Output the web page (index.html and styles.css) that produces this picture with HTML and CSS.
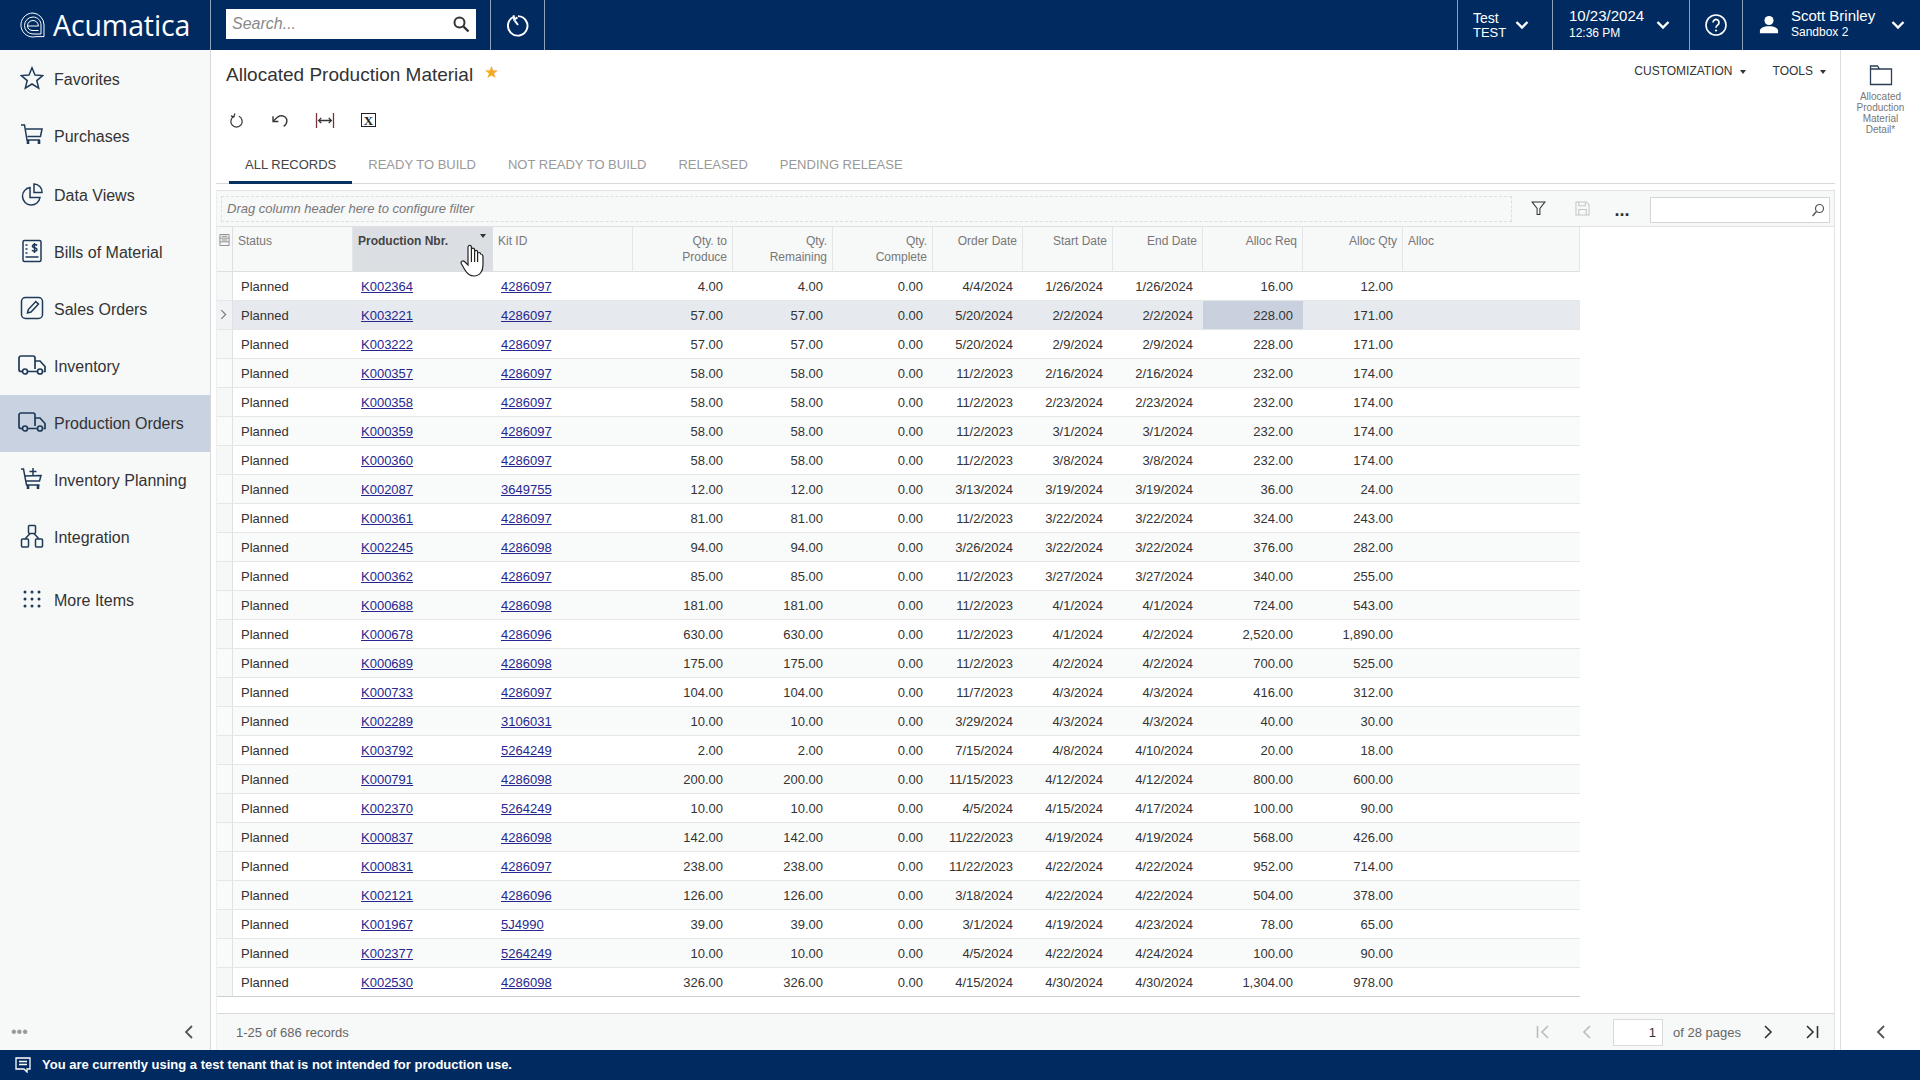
FILE: index.html
```html
<!DOCTYPE html>
<html lang="en">
<head>
    <meta charset="UTF-8">
    <meta name="viewport" content="width=device-width, initial-scale=1.0">
    <title>Allocated Production Material</title>
    <link rel="stylesheet" href="styles.css">
</head>
<body>

    <svg class="defs" width="0" height="0">
        <symbol id="chev-down" viewBox="0 0 14 10"><path d="M1.5 2 7 7.5 12.5 2" fill="none" stroke="currentColor" stroke-width="2.4"/></symbol>
        <symbol id="truck" viewBox="0 0 28 20"><path d="M4.500 16.500H3a2 2 0 0 1-2-2V3a2 2 0 0 1 2-2h12a2 2 0 0 1 2 2v11M9.500 16.500h9.500M17 6h5l5 5.500v5h-1.500" fill="none" stroke="currentColor" stroke-width="1.700"/><circle cx="7" cy="16.500" r="2.500" fill="none" stroke="currentColor" stroke-width="1.700"/><circle cx="22" cy="16.500" r="2.500" fill="none" stroke="currentColor" stroke-width="1.700"/></symbol>
    </svg>

    <header class="topbar">
        <div class="logo">
            <svg class="logo-mark" viewBox="0 0 26 26"><path d="M13 1a12 12 0 1 0 3 23.6h8V13A12 12 0 0 0 13 1Z" fill="none" stroke="#fff" stroke-width="1"/><path d="M13 5a8.5 8.5 0 0 0-8.500 8.500A8.500 8.500 0 0 0 13 22h8v-9c0-4.500-3.500-8-8-8Z" fill="none" stroke="#fff" stroke-width="1"/><path d="M7.500 14c0-3.500 2.500-5.500 5.500-5.500s5 2 5.500 5.500H7.500c.2 3 2.500 4.500 5.500 4.500h5.500" fill="none" stroke="#fff" stroke-width="1"/></svg>
            <span class="logo-text">Acumatica</span>
        </div>
        <div class="search-wrap">
            <div class="search">
                <span class="search-hint">Search...</span>
                <svg viewBox="0 0 18 18" width="18" height="18"><circle cx="7.500" cy="7.500" r="5" fill="none" stroke="#333" stroke-width="2"/><path d="m11.500 11.500 5 5" stroke="#333" stroke-width="2.400"/></svg>
            </div>
        </div>
        <div class="history">
            <svg viewBox="0 0 24 24" width="26" height="26"><path d="M8 4.600a9 9 0 1 0 4-.800" fill="none" stroke="#fff" stroke-width="1.800"/><path d="m8 3 .5 4 3-2M12 12 9 8" fill="none" stroke="#fff" stroke-width="1.800"/></svg>
        </div>
        <div class="topbar-space"></div>
        <div class="top-item top-tenant">
            <div class="top-lines"><span class="line-big">Test</span><span class="line-mid">TEST</span></div>
            <svg class="chev"><use href="#chev-down"/></svg>
        </div>
        <div class="top-item top-date">
            <div class="top-lines"><span class="line-large">10/23/2024</span><span class="line-small">12:36 PM</span></div>
            <svg class="chev"><use href="#chev-down"/></svg>
        </div>
        <div class="top-item top-help">
            <svg viewBox="0 0 24 24" width="24" height="24"><circle cx="12" cy="12" r="10" fill="none" stroke="#fff" stroke-width="1.600"/><path d="M9 9.500a3 3 0 1 1 4.800 2.400c-1.200.9-1.800 1.400-1.800 2.800" fill="none" stroke="#fff" stroke-width="1.700"/><circle cx="12" cy="17.500" r="1.100" fill="#fff"/></svg>
        </div>
        <div class="top-item top-user">
            <svg viewBox="0 0 22 24" width="20" height="22"><circle cx="11" cy="7" r="5" fill="#fff"/><path d="M1 21v-2.500c0-3 4-5 10-5s10 2 10 5V21Z" fill="#fff"/></svg>
            <div class="top-lines user-lines"><span class="line-large">Scott Brinley</span><span class="line-small">Sandbox 2</span></div>
            <svg class="chev"><use href="#chev-down"/></svg>
        </div>
    </header>

    <div class="main">
        <nav class="sidebar">
            <a class="nav-item">
                <svg viewBox="0 0 24 24"><path d="m12 1.800 3 7.200 7.700.6-5.900 5 1.900 7.500L12 18l-6.700 4.100 1.900-7.500-5.900-5L9 9Z"/></svg>
                Favorites
            </a>
            <a class="nav-item nav-gap">
                <svg viewBox="0 0 24 24"><path d="M1 2h3.500l2.500 15h13M6 6h16l-1.500 7.500H7.500"/><path d="M8 17v4M19 17v4" stroke-width="2.600"/></svg>
                Purchases
            </a>
            <a class="nav-item">
                <svg viewBox="0 0 24 24"><path d="M10 5.500a8.800 8.800 0 1 0 10 10H10Z"/><path d="M14 2a8 8 0 0 1 8 8.500h-8Z"/></svg>
                Data Views
            </a>
            <a class="nav-item">
                <svg viewBox="0 0 24 24"><rect x="3" y="1.500" width="18" height="21" rx="1.500"/><path d="M5.500 6h2M5.500 10h2M5.500 14h2M5.500 18h13M17 6.500c-1-1.500-5-1.200-4.500 1 .4 1.700 4.500 1 4.500 3s-4 2.200-5 .7M14.500 4v10"/></svg>
                Bills of Material
            </a>
            <a class="nav-item">
                <svg viewBox="0 0 24 24"><rect x="1.500" y="1.500" width="21" height="21" rx="4"/><path d="m7.500 17 .8-3.500 7.500-8 2.700 2.600-7.500 8Z"/></svg>
                Sales Orders
            </a>
            <a class="nav-item">
                <svg class="nav-truck" viewBox="0 0 28 20"><use href="#truck"/></svg>
                Inventory
            </a>
            <a class="nav-item nav-active">
                <svg class="nav-truck" viewBox="0 0 28 20"><use href="#truck"/></svg>
                Production Orders
            </a>
            <a class="nav-item">
                <svg viewBox="0 0 24 24"><path d="M1 2h2.500L6.500 18h13M5 9l16-.5-1.500 5.500H6.500M13 1v7M9.500 4.500h7"/><path d="M8 18v4M18 18v4" stroke-width="2.600"/></svg>
                Inventory Planning
            </a>
            <a class="nav-item">
                <svg viewBox="0 0 24 24"><rect x="8.500" y="1.500" width="7" height="8" rx="1"/><rect x="1.500" y="15" width="7" height="8" rx="1"/><rect x="15.500" y="15" width="7" height="8" rx="1"/><path d="M10 9.500 5 15M14 9.500l5 5.500"/></svg>
                Integration
            </a>
            <a class="nav-item nav-more">
                <svg viewBox="0 0 24 24"><g class="dots"><circle cx="5" cy="5" r="1.500"/><circle cx="12" cy="5" r="1.500"/><circle cx="19" cy="5" r="1.500"/><circle cx="5" cy="12" r="1.500"/><circle cx="12" cy="12" r="1.500"/><circle cx="19" cy="12" r="1.500"/><circle cx="5" cy="19" r="1.500"/><circle cx="12" cy="19" r="1.500"/><circle cx="19" cy="19" r="1.500"/></g></svg>
                More Items
            </a>
            <div class="side-foot">
                <span class="side-dots">•••</span>
                <svg viewBox="0 0 10 16" width="10" height="16"><path d="M8 2 2 8l6 6" fill="none" stroke="#555" stroke-width="1.800"/></svg>
            </div>
        </nav>

        <section class="content">
            <div class="title-row">
                <h1 class="page-title">Allocated Production Material <span class="star">★</span></h1>
                <div class="page-menu">
                    <span>CUSTOMIZATION<i class="caret"></i></span>
                    <span>TOOLS<i class="caret"></i></span>
                </div>
            </div>

            <div class="actions">
                <svg viewBox="0 0 16 18"><path d="M5 4.500a6 6 0 1 0 5 0" fill="none" stroke="#333" stroke-width="1.300"/><path d="M5 1.500v3.800H1.800" transform="rotate(20 5 4)" fill="none" stroke="#333" stroke-width="1.300"/></svg>
                <svg viewBox="0 0 18 16"><path d="M2 8.500c2.500-3 4.500-5 7-5a5 5 0 0 1 5.500 5c0 2.500-1.500 4-3 5" fill="none" stroke="#333" stroke-width="1.300"/><path d="M1.500 4v5h5" fill="none" stroke="#333" stroke-width="1.300"/></svg>
                <svg viewBox="0 0 18 16"><path d="M1 1v14M17 1v14" stroke="#733" stroke-width="1.200"/><path d="M3 8h12M5.500 5.500 3 8l2.500 2.500M12.500 5.500 15 8l-2.500 2.500" fill="none" stroke="#333" stroke-width="1.200"/></svg>
                <span class="excel-box"><span class="excel-x">X</span></span>
            </div>

            <div class="tabs">
                <a class="tab tab-active">ALL RECORDS</a>
                <a class="tab">READY TO BUILD</a>
                <a class="tab">NOT READY TO BUILD</a>
                <a class="tab">RELEASED</a>
                <a class="tab">PENDING RELEASE</a>
            </div>

            <div class="grid">
                <div class="grid-tools">
                    <div class="filter-drop">Drag column header here to configure filter</div>
                    <span class="tool-btn">
                        <svg viewBox="0 0 16 16" width="15" height="15"><path d="M1 1h14L9.500 8v6.500h-3V8Z" fill="none" stroke="#333" stroke-width="1.100"/></svg>
                    </span>
                    <span class="tool-btn">
                        <svg viewBox="0 0 16 16" width="15" height="15"><path d="M1 1h11l3 3v11H1ZM4 1v4h7V1M4 15V9h8v6" fill="none" stroke="#c4c6c8" stroke-width="1.100"/></svg>
                    </span>
                    <span class="tool-btn tool-more">...</span>
                    <div class="grid-search">
                        <svg viewBox="0 0 14 14" width="14" height="14"><circle cx="8.500" cy="5.500" r="4" fill="none" stroke="#555" stroke-width="1.200"/><path d="m5.500 8.500-4 4.500" stroke="#555" stroke-width="1.400"/></svg>
                    </div>
                </div>

                <div class="table-wrap">
                    <table class="records">
                        <colgroup>
                            <col class="c-gutter"><col class="c-status"><col class="c-link"><col class="c-link">
                            <col class="c-qty"><col class="c-qty"><col class="c-qty">
                            <col class="c-date"><col class="c-date"><col class="c-date">
                            <col class="c-qty"><col class="c-qty"><col class="c-last">
                        </colgroup>
                        <thead>
                            <tr>
                                <th class="gutter"><svg viewBox="0 0 12 13" width="11" height="12"><path d="M1 .5h10v12H1ZM1 4.500h10M1 8.500h10M3 2.500h6M3 6.500h6" fill="none" stroke="#888" stroke-width="1"/></svg></th>
                                <th>Status</th>
                                <th class="sorted">Production Nbr.<i class="sort-mark"></i></th>
                                <th>Kit ID</th>
                                <th class="num">Qty. to<br>Produce</th>
                                <th class="num">Qty.<br>Remaining</th>
                                <th class="num">Qty.<br>Complete</th>
                                <th class="num">Order Date</th>
                                <th class="num">Start Date</th>
                                <th class="num">End Date</th>
                                <th class="num">Alloc Req</th>
                                <th class="num">Alloc Qty</th>
                                <th>Alloc</th>
                            </tr>
                        </thead>
                        <tbody>
                            <tr><td class="gutter"></td><td class="status">Planned</td><td class="pl"><a>K002364</a></td><td class="pl"><a>4286097</a></td><td class="val">4.00</td><td class="val">4.00</td><td class="val">0.00</td><td class="val">4/4/2024</td><td class="val">1/26/2024</td><td class="val">1/26/2024</td><td class="val">16.00</td><td class="val">12.00</td><td></td></tr>
                            <tr class="selected"><td class="gutter"><svg viewBox="0 0 8 12" width="7" height="11"><path d="m1.500 1 5 5-5 5" fill="none" stroke="#777" stroke-width="1.300"/></svg></td><td class="status">Planned</td><td class="pl"><a>K003221</a></td><td class="pl"><a>4286097</a></td><td class="val">57.00</td><td class="val">57.00</td><td class="val">0.00</td><td class="val">5/20/2024</td><td class="val">2/2/2024</td><td class="val">2/2/2024</td><td class="val active-cell">228.00</td><td class="val">171.00</td><td></td></tr>
                            <tr><td class="gutter"></td><td class="status">Planned</td><td class="pl"><a>K003222</a></td><td class="pl"><a>4286097</a></td><td class="val">57.00</td><td class="val">57.00</td><td class="val">0.00</td><td class="val">5/20/2024</td><td class="val">2/9/2024</td><td class="val">2/9/2024</td><td class="val">228.00</td><td class="val">171.00</td><td></td></tr>
                            <tr><td class="gutter"></td><td class="status">Planned</td><td class="pl"><a>K000357</a></td><td class="pl"><a>4286097</a></td><td class="val">58.00</td><td class="val">58.00</td><td class="val">0.00</td><td class="val">11/2/2023</td><td class="val">2/16/2024</td><td class="val">2/16/2024</td><td class="val">232.00</td><td class="val">174.00</td><td></td></tr>
                            <tr><td class="gutter"></td><td class="status">Planned</td><td class="pl"><a>K000358</a></td><td class="pl"><a>4286097</a></td><td class="val">58.00</td><td class="val">58.00</td><td class="val">0.00</td><td class="val">11/2/2023</td><td class="val">2/23/2024</td><td class="val">2/23/2024</td><td class="val">232.00</td><td class="val">174.00</td><td></td></tr>
                            <tr><td class="gutter"></td><td class="status">Planned</td><td class="pl"><a>K000359</a></td><td class="pl"><a>4286097</a></td><td class="val">58.00</td><td class="val">58.00</td><td class="val">0.00</td><td class="val">11/2/2023</td><td class="val">3/1/2024</td><td class="val">3/1/2024</td><td class="val">232.00</td><td class="val">174.00</td><td></td></tr>
                            <tr><td class="gutter"></td><td class="status">Planned</td><td class="pl"><a>K000360</a></td><td class="pl"><a>4286097</a></td><td class="val">58.00</td><td class="val">58.00</td><td class="val">0.00</td><td class="val">11/2/2023</td><td class="val">3/8/2024</td><td class="val">3/8/2024</td><td class="val">232.00</td><td class="val">174.00</td><td></td></tr>
                            <tr><td class="gutter"></td><td class="status">Planned</td><td class="pl"><a>K002087</a></td><td class="pl"><a>3649755</a></td><td class="val">12.00</td><td class="val">12.00</td><td class="val">0.00</td><td class="val">3/13/2024</td><td class="val">3/19/2024</td><td class="val">3/19/2024</td><td class="val">36.00</td><td class="val">24.00</td><td></td></tr>
                            <tr><td class="gutter"></td><td class="status">Planned</td><td class="pl"><a>K000361</a></td><td class="pl"><a>4286097</a></td><td class="val">81.00</td><td class="val">81.00</td><td class="val">0.00</td><td class="val">11/2/2023</td><td class="val">3/22/2024</td><td class="val">3/22/2024</td><td class="val">324.00</td><td class="val">243.00</td><td></td></tr>
                            <tr><td class="gutter"></td><td class="status">Planned</td><td class="pl"><a>K002245</a></td><td class="pl"><a>4286098</a></td><td class="val">94.00</td><td class="val">94.00</td><td class="val">0.00</td><td class="val">3/26/2024</td><td class="val">3/22/2024</td><td class="val">3/22/2024</td><td class="val">376.00</td><td class="val">282.00</td><td></td></tr>
                            <tr><td class="gutter"></td><td class="status">Planned</td><td class="pl"><a>K000362</a></td><td class="pl"><a>4286097</a></td><td class="val">85.00</td><td class="val">85.00</td><td class="val">0.00</td><td class="val">11/2/2023</td><td class="val">3/27/2024</td><td class="val">3/27/2024</td><td class="val">340.00</td><td class="val">255.00</td><td></td></tr>
                            <tr><td class="gutter"></td><td class="status">Planned</td><td class="pl"><a>K000688</a></td><td class="pl"><a>4286098</a></td><td class="val">181.00</td><td class="val">181.00</td><td class="val">0.00</td><td class="val">11/2/2023</td><td class="val">4/1/2024</td><td class="val">4/1/2024</td><td class="val">724.00</td><td class="val">543.00</td><td></td></tr>
                            <tr><td class="gutter"></td><td class="status">Planned</td><td class="pl"><a>K000678</a></td><td class="pl"><a>4286096</a></td><td class="val">630.00</td><td class="val">630.00</td><td class="val">0.00</td><td class="val">11/2/2023</td><td class="val">4/1/2024</td><td class="val">4/2/2024</td><td class="val">2,520.00</td><td class="val">1,890.00</td><td></td></tr>
                            <tr><td class="gutter"></td><td class="status">Planned</td><td class="pl"><a>K000689</a></td><td class="pl"><a>4286098</a></td><td class="val">175.00</td><td class="val">175.00</td><td class="val">0.00</td><td class="val">11/2/2023</td><td class="val">4/2/2024</td><td class="val">4/2/2024</td><td class="val">700.00</td><td class="val">525.00</td><td></td></tr>
                            <tr><td class="gutter"></td><td class="status">Planned</td><td class="pl"><a>K000733</a></td><td class="pl"><a>4286097</a></td><td class="val">104.00</td><td class="val">104.00</td><td class="val">0.00</td><td class="val">11/7/2023</td><td class="val">4/3/2024</td><td class="val">4/3/2024</td><td class="val">416.00</td><td class="val">312.00</td><td></td></tr>
                            <tr><td class="gutter"></td><td class="status">Planned</td><td class="pl"><a>K002289</a></td><td class="pl"><a>3106031</a></td><td class="val">10.00</td><td class="val">10.00</td><td class="val">0.00</td><td class="val">3/29/2024</td><td class="val">4/3/2024</td><td class="val">4/3/2024</td><td class="val">40.00</td><td class="val">30.00</td><td></td></tr>
                            <tr><td class="gutter"></td><td class="status">Planned</td><td class="pl"><a>K003792</a></td><td class="pl"><a>5264249</a></td><td class="val">2.00</td><td class="val">2.00</td><td class="val">0.00</td><td class="val">7/15/2024</td><td class="val">4/8/2024</td><td class="val">4/10/2024</td><td class="val">20.00</td><td class="val">18.00</td><td></td></tr>
                            <tr><td class="gutter"></td><td class="status">Planned</td><td class="pl"><a>K000791</a></td><td class="pl"><a>4286098</a></td><td class="val">200.00</td><td class="val">200.00</td><td class="val">0.00</td><td class="val">11/15/2023</td><td class="val">4/12/2024</td><td class="val">4/12/2024</td><td class="val">800.00</td><td class="val">600.00</td><td></td></tr>
                            <tr><td class="gutter"></td><td class="status">Planned</td><td class="pl"><a>K002370</a></td><td class="pl"><a>5264249</a></td><td class="val">10.00</td><td class="val">10.00</td><td class="val">0.00</td><td class="val">4/5/2024</td><td class="val">4/15/2024</td><td class="val">4/17/2024</td><td class="val">100.00</td><td class="val">90.00</td><td></td></tr>
                            <tr><td class="gutter"></td><td class="status">Planned</td><td class="pl"><a>K000837</a></td><td class="pl"><a>4286098</a></td><td class="val">142.00</td><td class="val">142.00</td><td class="val">0.00</td><td class="val">11/22/2023</td><td class="val">4/19/2024</td><td class="val">4/19/2024</td><td class="val">568.00</td><td class="val">426.00</td><td></td></tr>
                            <tr><td class="gutter"></td><td class="status">Planned</td><td class="pl"><a>K000831</a></td><td class="pl"><a>4286097</a></td><td class="val">238.00</td><td class="val">238.00</td><td class="val">0.00</td><td class="val">11/22/2023</td><td class="val">4/22/2024</td><td class="val">4/22/2024</td><td class="val">952.00</td><td class="val">714.00</td><td></td></tr>
                            <tr><td class="gutter"></td><td class="status">Planned</td><td class="pl"><a>K002121</a></td><td class="pl"><a>4286096</a></td><td class="val">126.00</td><td class="val">126.00</td><td class="val">0.00</td><td class="val">3/18/2024</td><td class="val">4/22/2024</td><td class="val">4/22/2024</td><td class="val">504.00</td><td class="val">378.00</td><td></td></tr>
                            <tr><td class="gutter"></td><td class="status">Planned</td><td class="pl"><a>K001967</a></td><td class="pl"><a>5J4990</a></td><td class="val">39.00</td><td class="val">39.00</td><td class="val">0.00</td><td class="val">3/1/2024</td><td class="val">4/19/2024</td><td class="val">4/23/2024</td><td class="val">78.00</td><td class="val">65.00</td><td></td></tr>
                            <tr><td class="gutter"></td><td class="status">Planned</td><td class="pl"><a>K002377</a></td><td class="pl"><a>5264249</a></td><td class="val">10.00</td><td class="val">10.00</td><td class="val">0.00</td><td class="val">4/5/2024</td><td class="val">4/22/2024</td><td class="val">4/24/2024</td><td class="val">100.00</td><td class="val">90.00</td><td></td></tr>
                            <tr><td class="gutter"></td><td class="status">Planned</td><td class="pl"><a>K002530</a></td><td class="pl"><a>4286098</a></td><td class="val">326.00</td><td class="val">326.00</td><td class="val">0.00</td><td class="val">4/15/2024</td><td class="val">4/30/2024</td><td class="val">4/30/2024</td><td class="val">1,304.00</td><td class="val">978.00</td><td></td></tr>
                        </tbody>
                    </table>
                </div>

                <div class="pager">
                    <span class="pager-count">1-25 of 686 records</span>
                    <div class="pager-nav">
                        <svg class="page-btn" viewBox="0 0 16 16"><path d="M2.500 2v12M13 2 7 8l6 6" fill="none" stroke="#bbb" stroke-width="1.600"/></svg>
                        <svg class="page-btn" viewBox="0 0 16 16"><path d="M11 2 5 8l6 6" fill="none" stroke="#bbb" stroke-width="1.600"/></svg>
                        <span class="page-input">1</span>
                        <span class="page-total">of 28 pages</span>
                        <svg class="page-btn" viewBox="0 0 16 16"><path d="m5 2 6 6-6 6" fill="none" stroke="#333" stroke-width="1.600"/></svg>
                        <svg class="page-btn" viewBox="0 0 16 16"><path d="m3 2 6 6-6 6M13.500 2v12" fill="none" stroke="#333" stroke-width="1.600"/></svg>
                    </div>
                </div>
            </div>
        </section>

        <aside class="side-panel">
            <div class="panel-link">
                <svg viewBox="0 0 24 24" width="24" height="24"><path d="M1.500 21.500V3h7l2 3h12v15.500ZM1.500 6h9" fill="none" stroke="#2b3f55" stroke-width="1.300"/></svg>
                <span>Allocated<br>Production<br>Material<br>Detail*</span>
            </div>
            <svg class="panel-back" viewBox="0 0 10 16" width="10" height="16"><path d="M8 2 2 8l6 6" fill="none" stroke="#555" stroke-width="1.800"/></svg>
        </aside>
    </div>

    <footer class="notice">
        <svg viewBox="0 0 16 16" width="16" height="16"><path d="M1 1h14v11h-3v3l-3-3H1Z" fill="none" stroke="#fff" stroke-width="1.300"/><path d="M4 4.500h8M4 7.500h8" stroke="#fff" stroke-width="1.300"/></svg>
        You are currently using a test tenant that is not intended for production use.
    </footer>

    <!-- mouse pointer in the recording -->
    <svg class="hand" viewBox="0 0 26 34"><path d="M8 3.500c0-3 3.400-3 3.400 0v2.500c0-2.400 3.200-2.400 3.200 0v2c0-2.200 3-2.200 3 0v2c0-2 3-2 3 0 2.400 0 2.400 1.500 2.400 3v8c0 6-3 11-9 11-5 0-7-2.500-9-6L1.500 20c-1.300-2.200 1-4 3-2.500L8 21Z" fill="#fff" stroke="#222" stroke-width="1.200"/><path d="M11.400 6v12M14.600 8v10M17.600 10v8" fill="none" stroke="#222" stroke-width="1.200"/></svg>

</body>
</html>
```

FILE: styles.css
```css
* {
    box-sizing: border-box;
}

html, body {
    height: 100%;
}

body {
    margin: 0;
    font-family: 'Liberation Sans', Arial, sans-serif;
    font-size: 13px;
    color: #333;
    background-color: #fff;
    display: flex;
    flex-direction: column;
    overflow: hidden;
    position: relative;
}

.defs {
    position: absolute;
}

/* barra superior */
.topbar {
    height: 50px;
    flex: none;
    display: flex;
    background-color: #012b60;
    color: #fff;
}

.logo {
    width: 211px;
    display: flex;
    align-items: center;
    padding-left: 20px;
    gap: 7px;
    border-right: 1px solid #8fa3bd;
}

.logo-mark {
    width: 26px;
    height: 26px;
}

.logo-text {
    font-family: 'Open Sans', sans-serif;
    font-size: 28.500px;
    letter-spacing: -0.1px;
}

.search-wrap {
    width: 280px;
    padding-left: 15px;
    display: flex;
    align-items: center;
    border-right: 1px solid #8fa3bd;
}

.search {
    width: 250px;
    height: 30px;
    margin-top: -3px;
    background-color: #fff;
    display: flex;
    align-items: center;
    justify-content: space-between;
    padding: 0 6px 0 6px;
}

.search-hint {
    font-size: 16px;
    font-style: italic;
    color: #8a8a8a;
}

.history {
    width: 54px;
    display: flex;
    align-items: center;
    justify-content: center;
    border-right: 1px solid #8fa3bd;
}

.topbar-space {
    flex: 1;
}

.top-item {
    display: flex;
    align-items: center;
    border-left: 1px solid #8fa3bd;
}

.top-tenant {
    width: 95px;
    padding-left: 15px;
}

.top-date {
    width: 137px;
    padding-left: 16px;
}

.top-help {
    width: 53px;
    justify-content: center;
}

.top-user {
    width: 178px;
    padding-left: 16px;
}

.top-lines {
    display: flex;
    flex-direction: column;
}

.user-lines {
    margin-left: 12px;
    width: 97px;
}

.user-lines .line-large {
    line-height: 15px;
}

.user-lines .line-small {
    line-height: 19px;
}

.line-big {
    font-size: 14px;
    line-height: 16px;
}

.line-mid {
    font-size: 13px;
    line-height: 14px;
}

.line-large {
    font-size: 15px;
    line-height: 16px;
}

.line-small {
    font-size: 12px;
    line-height: 18px;
}

.chev {
    width: 14px;
    height: 10px;
    color: #fff;
}

.top-tenant .chev {
    margin-left: 9px;
}

.top-date .chev {
    margin-left: 12px;
}

.top-user .chev {
    margin-left: 3px;
}

.main {
    flex: 1;
    min-height: 0;
    display: flex;
}

/* menu lateral */
.sidebar {
    width: 211px;
    flex: none;
    display: flex;
    flex-direction: column;
    background-color: #f7f9f9;
    border-right: 1px solid #d6d9dc;
    padding-top: 1px;
}

.nav-item {
    height: 57px;
    flex: none;
    display: flex;
    align-items: center;
    gap: 10px;
    padding-left: 20px;
    font-size: 16px;
    color: #333;
}

.nav-item svg {
    width: 24px;
    height: 24px;
    fill: none;
    stroke: #1f3a57;
    stroke-width: 1.500;
    color: #1f3a57;
    margin-top: -3px;
}

.nav-item svg.nav-truck {
    width: 28px;
    height: 20px;
    margin-left: -2px;
    margin-right: -2px;
    stroke: none;
}

.nav-gap {
    margin-bottom: 2px;
}

.nav-active {
    background-color: #c8d2e0;
}

.nav-more {
    margin-top: 6px;
}

.dots {
    fill: #1f3a57;
    stroke: none;
}

.side-foot {
    margin-top: auto;
    height: 36px;
    display: flex;
    align-items: center;
    justify-content: space-between;
    padding: 0 16px 0 11px;
}

.side-dots {
    color: #999;
    font-size: 16px;
}

/* conteudo */
.content {
    flex: 1;
    min-width: 0;
    display: flex;
    flex-direction: column;
    padding: 0 5px 0 5px;
}

.title-row {
    height: 50px;
    flex: none;
    display: flex;
    justify-content: space-between;
    padding-left: 10px;
}

.page-title {
    margin: 0;
    font-size: 19px;
    font-weight: normal;
    line-height: 50px;
    color: #333;
}

.star {
    color: #f5a91f;
    font-size: 17px;
    margin-left: 6px;
    position: relative;
    top: -3px;
}

.page-menu {
    display: flex;
    gap: 27px;
    padding: 14px 9px 0 0;
    font-size: 12px;
    line-height: 14px;
    color: #333;
}

.caret {
    display: inline-block;
    margin-left: 7px;
    vertical-align: middle;
    border-left: 3.500px solid transparent;
    border-right: 3.500px solid transparent;
    border-top: 4px solid #333;
}

.actions {
    height: 40px;
    flex: none;
    display: flex;
    align-items: center;
    margin-left: -1px;
}

.actions svg {
    width: 44px;
    height: 17px;
}

.excel-box {
    width: 15px;
    height: 14px;
    margin-left: 14px;
    display: flex;
    align-items: center;
    justify-content: center;
    border: 1.500px solid #222;
}

.excel-x {
    font-family: 'Liberation Serif', serif;
    font-size: 13px;
    font-weight: bold;
    line-height: 11px;
    color: #222;
}

.tabs {
    height: 44px;
    flex: none;
    display: flex;
    padding-left: 13px;
    border-bottom: 1px solid #d8dadc;
}

.tab {
    height: 44px;
    padding: 17px 16px 0;
    line-height: 16px;
    font-size: 13px;
    color: #999;
}

.tab-active {
    color: #444;
    border-bottom: 3px solid #06305f;
}

/* grade */
.grid {
    flex: 1;
    min-height: 0;
    margin-top: 6px;
    display: flex;
    flex-direction: column;
    border: 1px solid #e0e2e4;
    border-bottom: none;
    border-left-color: #eceeef;
}

.grid-tools {
    height: 36px;
    flex: none;
    display: flex;
    align-items: center;
    padding: 0 4px 0 4px;
    background-color: #f7f8f8;
    border-bottom: 1px solid #dfe1e3;
}

.filter-drop {
    flex: 1;
    height: 26px;
    margin-right: 4px;
    line-height: 24px;
    padding-left: 5px;
    font-style: italic;
    color: #777;
    border: 1px dashed #dcdedf;
}

.tool-btn {
    width: 44px;
    height: 26px;
    display: flex;
    align-items: center;
    justify-content: center;
}

.tool-more {
    width: 36px;
    font-size: 18px;
    font-weight: bold;
    color: #333;
    line-height: 26px;
    padding-top: 2px;
}

.grid-search {
    width: 180px;
    height: 26px;
    margin: 2px 0 0 10px;
    background-color: #fff;
    border: 1px solid #d3d5d7;
    display: flex;
    align-items: center;
    justify-content: flex-end;
    padding-right: 4px;
}

.table-wrap {
    flex: 1;
    min-height: 0;
}

.records {
    table-layout: fixed;
    border-collapse: separate;
    border-spacing: 0;
    width: 1363px;
}

.c-gutter { width: 16px; }
.c-status { width: 120px; }
.c-link { width: 140px; }
.c-qty { width: 100px; }
.c-date { width: 90px; }
.c-last { width: 177px; }

.records th {
    height: 45px;
    padding: 6px 5px 0;
    vertical-align: top;
    text-align: left;
    font-size: 12px;
    font-weight: normal;
    line-height: 16px;
    color: #777;
    background-color: #f7f8f8;
    border-right: 1px solid #e3e5e7;
    border-bottom: 1px solid #dcdee0;
    position: relative;
}

.records th.num {
    text-align: right;
}

.records th.sorted {
    background-color: #dbdfe3;
    font-weight: bold;
    color: #444;
    border-right: none;
}

.records th.gutter {
    padding: 7px 0 0 2px;
    border-right: 1px solid #dcdee0;
}

.sort-mark {
    position: absolute;
    top: 7px;
    right: 7px;
    border-left: 3.500px solid transparent;
    border-right: 3.500px solid transparent;
    border-top: 4px solid #333;
}

.records td {
    height: 29px;
    padding: 0 10px 0 0;
    font-size: 13px;
    color: #333;
    white-space: nowrap;
    border-bottom: 1px solid #e4e6e7;
}

.records tbody tr:nth-child(even) td {
    background-color: #f9fafa;
}

.records td.gutter {
    padding: 1px 0 0 3px;
    background-color: #f6f7f7;
    border-right: 1px solid #dfe1e3;
}

.records td.status {
    padding-left: 8px;
}

.records td.pl {
    padding-left: 8px;
}

.records td a {
    color: #27278f;
    text-decoration: underline;
}

.records td.val {
    text-align: right;
}

.records tbody tr.selected td {
    background-color: #e6eaef;
}

.records tbody tr.selected td.active-cell {
    background-color: #c9d1de;
}

.records tbody tr.selected td.gutter {
    background-color: #f0f2f4;
}

.records tbody tr:last-child td {
    border-bottom-color: #ccd0d3;
}

.pager {
    height: 37px;
    flex: none;
    display: flex;
    align-items: center;
    justify-content: space-between;
    padding: 0 0 0 19px;
    background-color: #f7f8f8;
    border-top: 1px solid #d8dadc;
}

.pager-count {
    color: #666;
}

.pager-nav {
    display: flex;
    align-items: center;
}

.page-btn {
    width: 16px;
    height: 16px;
    margin: 0 14px;
}

.page-input {
    width: 50px;
    height: 27px;
    margin: 0 10px 0 4px;
    padding-right: 6px;
    line-height: 25px;
    text-align: right;
    background-color: #fff;
    border: 1px solid #d8dadc;
    color: #333;
}

.page-total {
    width: 73px;
    color: #666;
}

/* painel direito */
.side-panel {
    width: 80px;
    flex: none;
    display: flex;
    flex-direction: column;
    align-items: center;
    border-left: 1px solid #dcdfe1;
}

.panel-link {
    padding-top: 13px;
    display: flex;
    flex-direction: column;
    align-items: center;
    gap: 4px;
    text-align: center;
    font-size: 10px;
    line-height: 11px;
    color: #777;
}

.panel-back {
    margin-top: auto;
    margin-bottom: 10px;
}

.notice {
    height: 30px;
    flex: none;
    display: flex;
    align-items: center;
    gap: 11px;
    padding: 0 0 1px 15px;
    background-color: #012b60;
    color: #fff;
    font-size: 13px;
    font-weight: bold;
}

.hand {
    position: absolute;
    left: 460px;
    top: 244px;
    width: 26px;
    height: 34px;
}
```
